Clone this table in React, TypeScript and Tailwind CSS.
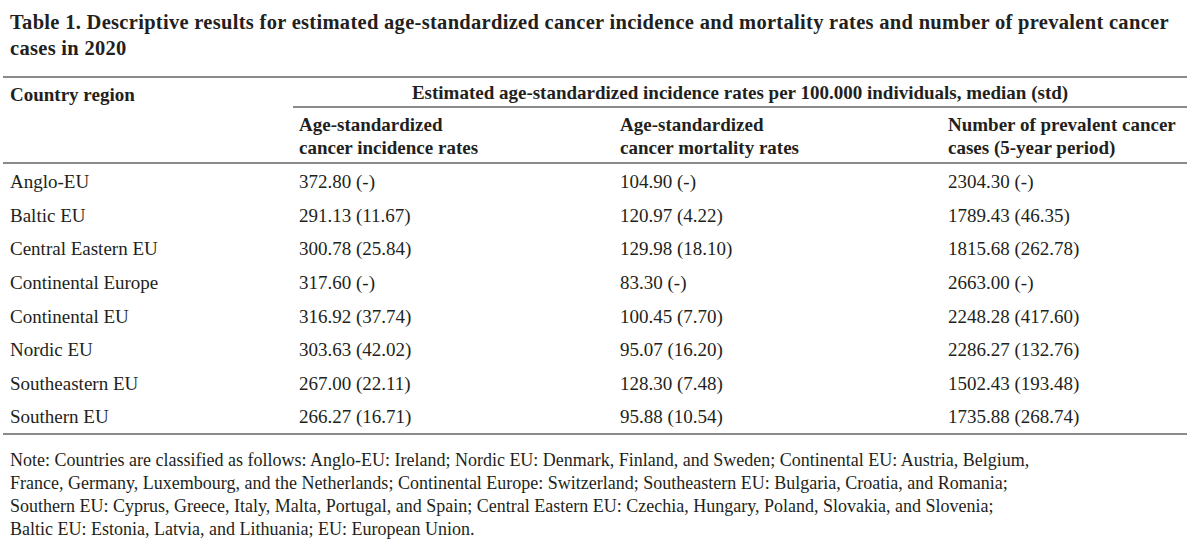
import React from "react";

const rows: [string, string, string, string][] = [
  ["Anglo-EU", "372.80 (-)", "104.90 (-)", "2304.30 (-)"],
  ["Baltic EU", "291.13 (11.67)", "120.97 (4.22)", "1789.43 (46.35)"],
  ["Central Eastern EU", "300.78 (25.84)", "129.98 (18.10)", "1815.68 (262.78)"],
  ["Continental Europe", "317.60 (-)", "83.30 (-)", "2663.00 (-)"],
  ["Continental EU", "316.92 (37.74)", "100.45 (7.70)", "2248.28 (417.60)"],
  ["Nordic EU", "303.63 (42.02)", "95.07 (16.20)", "2286.27 (132.76)"],
  ["Southeastern EU", "267.00 (22.11)", "128.30 (7.48)", "1502.43 (193.48)"],
  ["Southern EU", "266.27 (16.71)", "95.88 (10.54)", "1735.88 (268.74)"],
];

export default function App() {
  return (
    <div
      className="w-[1200px] h-[543px] bg-white text-[#231f20] overflow-hidden"
      style={{ fontFamily: '"Liberation Serif", "Times New Roman", serif' }}
    >
      <div className="pl-[10px] pt-[9px] text-[20.5px] tracking-[0.3px] leading-[26px] font-bold w-[1200px] whitespace-nowrap">
        Table 1. Descriptive results for estimated age-standardized cancer incidence and mortality rates and number of prevalent cancer
        <br />
        cases in 2020
      </div>
      <div className="ml-[3px] w-[1184px] mt-[15px] text-[19px]">
        <div className="border-t-2 border-[#8a8a8a]" />
        <div className="grid grid-cols-[290px_321px_328px_245px]">
          <div className="row-span-2 pl-[7px] pt-[4px] font-bold leading-[26px]">Country region</div>
          <div className="col-span-3 h-[30px] flex items-center justify-center font-bold leading-[26px] border-b-2 border-[#8a8a8a] pt-[1px]">
            Estimated age-standardized incidence rates per 100.000 individuals, median (std)
          </div>
          <div className="pl-[6px] pt-[5px] pb-[3px] font-bold leading-[23px]">
            Age-standardized
            <br />
            cancer incidence rates
          </div>
          <div className="pl-[6px] pt-[5px] pb-[3px] font-bold leading-[23px]">
            Age-standardized
            <br />
            cancer mortality rates
          </div>
          <div className="pl-[6px] pt-[5px] pb-[3px] font-bold leading-[23px]">
            Number of prevalent cancer
            <br />
            cases (5-year period)
          </div>
        </div>
        <div className="border-t-2 border-[#8a8a8a]" />
        {rows.map((r) => (
          <div key={r[0]} className="grid grid-cols-[290px_321px_328px_245px] h-[33.6px] items-center pt-[3px] leading-[24px]">
            <div className="pl-[7px]">{r[0]}</div>
            <div className="pl-[6px]">{r[1]}</div>
            <div className="pl-[6px]">{r[2]}</div>
            <div className="pl-[6px]">{r[3]}</div>
          </div>
        ))}
        <div className="border-t-2 border-[#8a8a8a]" />
      </div>
      <div className="pl-[10px] pt-[14px] text-[18px] leading-[23px] w-[1190px]">
        Note: Countries are classified as follows: Anglo-EU: Ireland; Nordic EU: Denmark, Finland, and Sweden; Continental EU: Austria, Belgium,
        <br />
        France, Germany, Luxembourg, and the Netherlands; Continental Europe: Switzerland; Southeastern EU: Bulgaria, Croatia, and Romania;
        <br />
        Southern EU: Cyprus, Greece, Italy, Malta, Portugal, and Spain; Central Eastern EU: Czechia, Hungary, Poland, Slovakia, and Slovenia;
        <br />
        Baltic EU: Estonia, Latvia, and Lithuania; EU: European Union.
      </div>
    </div>
  );
}
